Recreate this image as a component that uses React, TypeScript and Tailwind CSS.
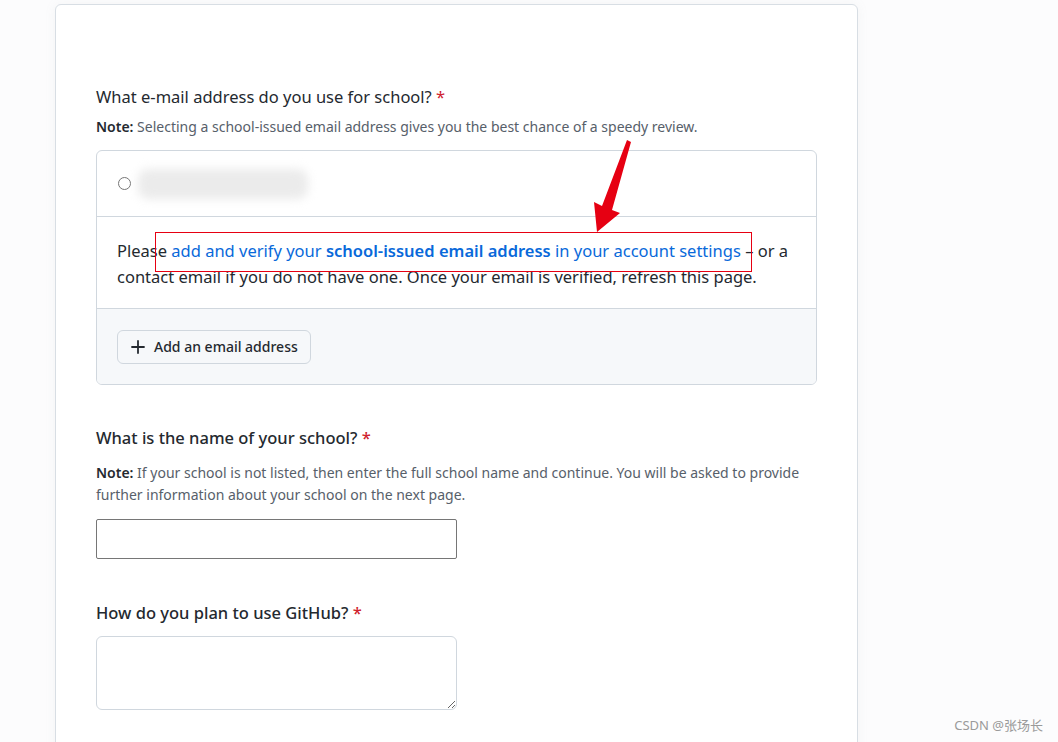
import React from 'react';

const font = { fontFamily: '"Noto Sans", "Noto Sans CJK SC", sans-serif' };

const Required = () => <span className="text-[#cf222e]"> *</span>;

const PlusIcon = () => (
  <svg className="w-4 h-4 text-[#24292f]" viewBox="0 0 16 16" fill="none" stroke="currentColor" strokeWidth={1.8}>
    <path d="M8 2v12M2 8h12" strokeLinecap="round" />
  </svg>
);

const App: React.FC = () => {
  return (
    <div className="h-[742px] bg-[#fcfcfd] text-[#24292f] relative overflow-hidden" style={font}>
      <div className="ml-[55px] mt-[4px] w-[803px] min-h-[760px] bg-white border border-[#d8dee4] rounded-md px-[40px] pt-[79px] shadow-[0_0_12px_rgba(140,149,159,0.08)]">
        {/* Email question */}
        <div>
          <h3 className="text-[16.5px] leading-[26px] font-normal">
            What e-mail address do you use for school?
            <Required />
          </h3>
          <p className="text-[14px] leading-[20px] text-[#57606a] mt-[7px]">
            <span className="font-semibold text-[#24292f]">Note:</span> Selecting a school-issued email address gives
            you the best chance of a speedy review.
          </p>

          <div className="mt-[13px] border border-[#d0d7de] rounded-md overflow-hidden">
            <div className="h-[66px] flex items-center px-[21px] gap-[7px] border-b border-[#d0d7de]">
              <span className="w-[13px] h-[13px] rounded-full border border-[#767676] bg-white" />
              <div className="w-[170px] h-[30px] rounded-[10px] bg-[#ebebeb] blur-[5px]" />
            </div>

            <div className="relative px-[20px] pt-[21px] pb-[18px] border-b border-[#d0d7de] text-[16.5px] leading-[26px]">
              Please{' '}
              <a className="text-[#0969da]">
                add and verify your <span className="font-semibold">school-issued email address</span> in your
                account settings
              </a>{' '}
              – or a contact email if you do not have one. Once your email is verified, refresh this page.
              {/* annotation */}
              <div className="absolute left-[58px] top-[15px] w-[597px] h-[40px] border border-[#e60012]" />
            </div>

            <div className="bg-[#f6f8fa] h-[75px] flex items-center px-[20px]">
              <button className="h-[34px] flex items-center gap-[8px] px-[12px] rounded-md border border-[#d0d7de] bg-[#f6f8fa] text-[14px] font-medium text-[#24292f]">
                <PlusIcon />
                Add an email address
              </button>
            </div>
          </div>
        </div>

        {/* School name */}
        <div className="mt-[40px]">
          <h3 className="text-[16.5px] leading-[26px] font-medium">
            What is the name of your school?
            <Required />
          </h3>
          <p className="text-[14px] leading-[22px] text-[#57606a] mt-[11px]">
            <span className="font-semibold text-[#24292f]">Note:</span> If your school is not listed, then enter the
            full school name and continue. You will be asked to provide further information about your school on
            the next page.
          </p>
          <input
            type="text"
            className="mt-[13px] block w-[361px] h-[40px] border border-[#767676] rounded-[2px] bg-white"
          />
        </div>

        {/* GitHub usage */}
        <div className="mt-[41px]">
          <h3 className="text-[16.5px] leading-[26px] font-medium">
            How do you plan to use GitHub?
            <Required />
          </h3>
          <textarea className="mt-[10px] block w-[361px] h-[74px] border border-[#d0d7de] rounded-md bg-white" />
        </div>
      </div>

      {/* annotation arrow */}
      <svg className="absolute left-[585px] top-[138px] w-[50px] h-[96px]" viewBox="0 0 50 96">
        <path d="M46 4 L27 72 L35 75 L12 94 L9 64 L17 68 L42 2 Z" fill="#e60012" />
      </svg>

      <div className="absolute right-[15px] bottom-[8px] text-[13px] leading-[18px] text-[#9a9a9a]">CSDN @张场长</div>
    </div>
  );
};

export default App;
